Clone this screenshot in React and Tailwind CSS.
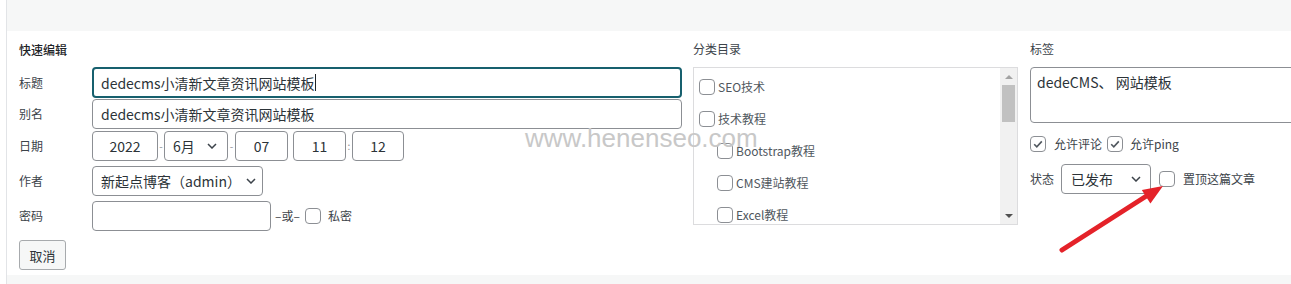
import React from "react";

function Check({ checked = false, className = "" }) {
  return (
    <span
      className={`flex items-center justify-center w-4 h-4 shrink-0 rounded-[4px] border border-[#8c8f94] bg-white ${className}`}
    >
      {checked && (
        <svg width="12" height="12" viewBox="0 0 12 12">
          <path d="M2.2 6.2l2.6 2.6L9.8 3.4" fill="none" stroke="#50575e" strokeWidth="1.6" />
        </svg>
      )}
    </span>
  );
}

function Chevron() {
  return (
    <svg width="10" height="6" viewBox="0 0 10 6" className="shrink-0">
      <path d="M1 1l4 4 4-4" fill="none" stroke="#3c434a" strokeWidth="1.5" />
    </svg>
  );
}

function Box({ className = "", children }) {
  return (
    <div
      className={`flex items-center shrink-0 h-[30px] rounded-[4px] border border-[#8c8f94] bg-white text-[14px] text-[#2c3338] ${className}`}
    >
      {children}
    </div>
  );
}

const categories = [
  { name: "SEO技术", child: false },
  { name: "技术教程", child: false },
  { name: "Bootstrap教程", child: true },
  { name: "CMS建站教程", child: true },
  { name: "Excel教程", child: true },
];

export default function App() {
  return (
    <div className="relative w-[1291px] h-[284px] overflow-hidden bg-white font-['Noto_Sans_CJK_SC',sans-serif] text-[#3c434a] leading-none">
      <div className="flex h-full">
        <div className="w-[6px] shrink-0 bg-white" />
        <div className="flex-1 min-w-0 flex flex-col border-l border-[#e2e4e7]">
          <div className="h-[31px] bg-[#f6f7f7]" />

          <div className="flex-1 flex pl-[12px] overflow-hidden">
            {/* LEFT */}
            <div className="w-[663px] shrink-0 flex flex-col">
              <div className="mt-[11px] h-[16px] flex items-center text-[12px] font-medium text-[#1d2327]">
                快速编辑
              </div>

              <div className="mt-[9px] flex items-center">
                <span className="w-[73px] text-[12px]">标题</span>
                <div className="flex items-center flex-1 h-[31px] rounded-[4px] border-2 border-[#17606e] pl-[7px] text-[14px] text-[#2c3338]">
                  dedecms小清新文章资讯网站模板
                  <span className="w-px h-[17px] bg-[#1d2327]" />
                </div>
              </div>

              <div className="mt-[1px] flex items-center">
                <span className="w-[73px] text-[12px]">别名</span>
                <Box className="flex-1 pl-[8px]">dedecms小清新文章资讯网站模板</Box>
              </div>

              <div className="mt-[2px] flex items-center">
                <span className="w-[73px] text-[12px]">日期</span>
                <Box className="w-[66px] justify-center">2022</Box>
                <span className="w-[6px] text-center text-[10px] text-[#8c8f94]">-</span>
                <Box className="w-[64px] pl-[8px] pr-[10px] justify-between">
                  6月
                  <Chevron />
                </Box>
                <span className="w-[7px] text-center text-[10px] text-[#8c8f94]">-</span>
                <Box className="w-[53px] justify-center">07</Box>
                <span className="w-[5px]" />
                <Box className="w-[53px] justify-center">11</Box>
                <span className="w-[6px] text-center text-[10px] text-[#8c8f94]">:</span>
                <Box className="w-[52px] justify-center">12</Box>
              </div>

              <div className="mt-[5px] flex items-center">
                <span className="w-[73px] text-[12px]">作者</span>
                <Box className="w-[171px] pl-[8px] pr-[6px] justify-between">
                  新起点博客（admin）
                  <Chevron />
                </Box>
              </div>

              <div className="mt-[5px] flex items-center">
                <span className="w-[73px] text-[12px]">密码</span>
                <Box className="w-[179px]" />
                <span className="ml-[4px] text-[12px]">–或–</span>
                <Check className="ml-[5px]" />
                <span className="ml-[7px] text-[12px]">私密</span>
              </div>

              <div className="mt-[9px]">
                <button className="w-[47px] h-[30px] rounded-[3px] border border-[#a7aaad] bg-[#f6f7f7] text-[13px] text-[#2c3338]">
                  取消
                </button>
              </div>
            </div>

            {/* MIDDLE */}
            <div className="ml-[11px] w-[325px] shrink-0 flex flex-col">
              <div className="mt-[10px] h-[16px] flex items-center text-[12px]">分类目录</div>
              <div className="mt-[10px] h-[158px] flex border border-[#dcdcde] bg-white overflow-hidden">
                <div className="flex-1 pl-[5px] pt-[3px] overflow-hidden">
                  {categories.map((c) => (
                    <div
                      key={c.name}
                      className={`h-[32px] flex items-center gap-[3px] text-[12px] text-[#50575e] ${c.child ? "pl-[18px]" : ""}`}
                    >
                      <Check />
                      {c.name}
                    </div>
                  ))}
                </div>
                <div className="w-[17px] bg-[#f1f1f1] flex flex-col">
                  <div className="h-[17px] flex items-center justify-center">
                    <span className="w-0 h-0 border-x-[4px] border-x-transparent border-b-[4px] border-b-[#a3a3a3]" />
                  </div>
                  <div className="mx-[2px] h-[37px] bg-[#c1c1c1]" />
                  <div className="flex-1" />
                  <div className="h-[17px] flex items-center justify-center">
                    <span className="w-0 h-0 border-x-[4px] border-x-transparent border-t-[4px] border-t-[#505050]" />
                  </div>
                </div>
              </div>
            </div>

            {/* RIGHT */}
            <div className="ml-[12px] w-[320px] flex flex-col shrink-0">
              <div className="mt-[10px] h-[16px] flex items-center text-[12px]">标签</div>
              <div className="mt-[10px] h-[56px] rounded-[4px] border border-[#8c8f94] pl-[6px] pt-[7px] text-[14px] text-[#2c3338]">
                dedeCMS、 网站模板
              </div>
              <div className="mt-[13px] flex items-center text-[12px]">
                <Check checked />
                <span className="ml-[8px]">允许评论</span>
                <Check checked className="ml-[5px]" />
                <span className="ml-[7px]">允许ping</span>
              </div>
              <div className="mt-[12px] flex items-center">
                <span className="text-[12px]">状态</span>
                <Box className="ml-[7px] w-[90px] pl-[9px] pr-[9px] justify-between">
                  已发布
                  <Chevron />
                </Box>
                <Check className="ml-[8px]" />
                <span className="ml-[8px] text-[12px]">置顶这篇文章</span>
              </div>
            </div>
          </div>

          <div className="h-[9px] bg-[#f6f7f7]" />
        </div>
      </div>

      {/* watermark */}
      <div className="absolute left-[525px] top-[125px] text-[26px] leading-[26px] font-['Liberation_Sans',sans-serif] text-[#c8c8c8] pointer-events-none">
        www.henenseo.com
      </div>

      {/* red arrow annotation */}
      <svg className="absolute left-0 top-0 pointer-events-none" width="1291" height="284">
        <line x1="1062" y1="250" x2="1148" y2="195" stroke="#e42229" strokeWidth="5" strokeLinecap="round" />
        <polygon points="1163,186 1150.4,203.5 1141.8,189.9" fill="#e42229" />
      </svg>
    </div>
  );
}
